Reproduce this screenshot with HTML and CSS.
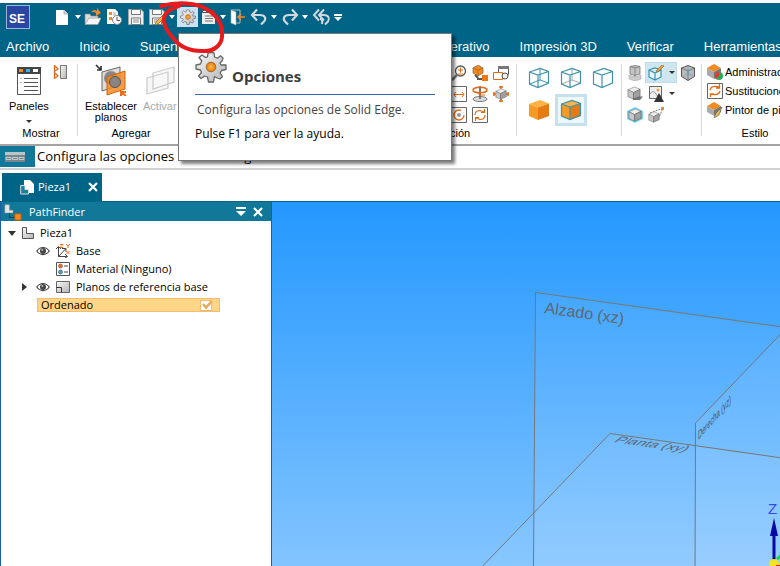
FILE: index.html
```
<!DOCTYPE html>
<html lang="es">
<head>
<meta charset="utf-8">
<title>Solid Edge - Pieza1</title>
<link rel="stylesheet" href="styles.css">
</head>
<body>
<svg class="defs" aria-hidden="true">
  <defs>
    <linearGradient id="metal" x1="0" y1="0" x2="1" y2="1"><stop offset="0" stop-color="#f8f8f8"/><stop offset="1" stop-color="#b4b4b4"/></linearGradient>
    <radialGradient id="amber"><stop offset="0" stop-color="#ffb64a"/><stop offset="1" stop-color="#e87a08"/></radialGradient>
    <linearGradient id="plane" x1="0" y1="0" x2="0" y2="1"><stop offset="0" stop-color="#fff" stop-opacity=".04"/><stop offset="1" stop-color="#fff" stop-opacity=".1"/></linearGradient>
  </defs>
  <symbol id="gear" viewBox="0 0 32 32">
    <path d="M13 2 L15 1.500 L17 1.500 L19 2 L19.500 6 L22.500 7.200 L25.500 4.800 L28 7 L27 10 L25 12 L26 14 L31 14 L31 18.500 L26.500 19.500 L25.200 22 L27.500 25.500 L25 28 L22 27 L19.500 25.500 L18.500 31 L13.500 31 L12.500 26 L9.500 25 L6 27.500 L3.500 25 L6.500 21.500 L5.500 19 L1 18 L1 14 L5.500 13 L6.800 10 L4 6.500 L7 4 L10.500 6.500 L12.500 5.800 Z" fill="url(#metal)" stroke="#666" stroke-width="1.300" stroke-linejoin="round"/>
    <circle cx="16" cy="16" r="4.800" fill="url(#amber)" stroke="#8a5a28" stroke-width=".8"/>
  </symbol>
  <symbol id="disk" viewBox="0 0 20 20"><path d="M2.500 2.500H15L17.500 5V17.500H2.500Z" fill="#eee" stroke="#a5a5a5"/><path d="M5.500 2.500h9v5h-9ZM5.500 11h9v6.500h-9Z" fill="#fff" stroke="#777"/><path d="M7 13h6M7 15h6" stroke="#888"/></symbol>
  <symbol id="wire" viewBox="0 0 22 22"><path d="M1.500 5L12 1.500L20.500 4.500V16L10 20.500L1.500 17ZM1.500 5L10 8L20.500 4.500M10 8V20.500" fill="none" stroke="#3d93ad" stroke-width="1.200"/></symbol>
  <symbol id="solid" viewBox="0 0 22 22"><path d="M1 5L12 1L21 4.500L10 8.500Z" fill="#ffb343"/><path d="M1 5L10 8.500V21L1 17Z" fill="#f59a25"/><path d="M10 8.500L21 4.500V17L10 21Z" fill="#e57b12"/></symbol>
  <symbol id="gray" viewBox="0 0 15 15"><path d="M1 4L8 1L14 3.500L7 7Z" fill="#eee" stroke="#888" stroke-width=".7"/><path d="M1 4L7 7V14L1 11.500Z" fill="#c8c8c8" stroke="#777" stroke-width=".7"/><path d="M7 7L14 3.500V11L7 14Z" fill="#a2a2a2" stroke="#666" stroke-width=".7"/></symbol>
  <symbol id="eye" viewBox="0 0 14 10"><path d="M.8 5C4 .3 10 .3 13.200 5C10 9.700 4 9.700.8 5Z" fill="#fff" stroke="#444" stroke-width="1.200"/><circle cx="7" cy="5" r="3" fill="#444"/><circle cx="6.300" cy="4" r="1" fill="#bbb"/></symbol>
  <symbol id="undo" viewBox="0 0 20 20"><path d="M8 2.500L3 8L8 13.500M3.500 8H11C16.500 8 17.500 12 14.500 15L12 17.500" fill="none" stroke="#d0d9df" stroke-width="2.200"/></symbol>
</svg>

<header class="titlebar">
  <div class="quick">
    <span class="logo">SE</span>
    <button class="tool" aria-label="Nuevo"><svg viewBox="0 0 20 20"><path d="M3 3H11L15 7V18H3Z" fill="#fff"/><path d="M11 3V7H15" fill="#ddd" stroke="#999" stroke-width=".7"/></svg></button>
    <button class="caret" aria-label="Más tipos de documento"></button>
    <button class="tool" aria-label="Abrir"><svg viewBox="0 0 20 20"><path d="M1 17V7H6L7 9H14V17Z" fill="#ddd" stroke="#888" stroke-width=".7"/><path d="M1 17.500L5 11H17L14 17.500Z" fill="#f5f5f5" stroke="#999" stroke-width=".7"/><path d="M7 6Q9 1 13 4V1L17 6L12 9V6Q9 4 7 6Z" fill="#f08a2c"/></svg></button>
    <button class="tool" aria-label="Recientes"><svg viewBox="0 0 20 20"><path d="M2 2H10L13 5V17H2Z" fill="#fff"/><path d="M4 5h3v3H4Z M4 10h3v3H4Z" fill="#f08a2c"/><path d="M8 6h3M8 8h3" stroke="#aaa"/><circle cx="12" cy="13" r="4.500" fill="#f8f8f8" stroke="#888"/><path d="M12 10V13.500H15" fill="none" stroke="#555"/></svg></button>
    <button class="tool" aria-label="Guardar"><svg><use href="#disk"/></svg></button>
    <button class="tool" aria-label="Guardar como"><svg viewBox="0 0 20 20"><use href="#disk"/><path d="M16 8L9 15L8 18L11 17L18 10Z" fill="#ffb343" stroke="#8a6a30" stroke-width=".7"/></svg></button>
    <button class="caret" aria-label="Más opciones de guardado"></button>
    <button class="tool active" aria-label="Opciones"><svg viewBox="0 0 20 20"><use href="#gear" x="2" y="2" width="16" height="16"/></svg></button>
    <button class="tool" aria-label="Personalizar"><svg viewBox="0 0 20 20"><path d="M3 3h13v14H3Z" fill="#ededed"/><path d="M3 3h13v3H3Z" fill="#555"/><path d="M4 4h3v1H4Z M9 4h3v1H9Z" fill="#fff"/><path d="M6 9h8M6 11.500h8M6 14h8" stroke="#777"/></svg></button>
    <button class="caret slim" aria-label="Más"></button>
    <button class="tool" aria-label="Cerrar"><svg viewBox="0 0 20 20"><path d="M3 3H12V16H8" fill="none" stroke="#bbb"/><path d="M3 3L8 5V18L3 16Z" fill="#fff" stroke="#aaa" stroke-width=".6"/><path d="M17 10H11M13 7L10 10L13 13" stroke="#f08a2c" stroke-width="1.500" fill="none"/></svg></button>
    <button class="tool" aria-label="Deshacer"><svg><use href="#undo"/></svg></button>
    <button class="caret" aria-label="Lista deshacer"></button>
    <button class="tool" aria-label="Rehacer"><svg viewBox="0 0 20 20"><use href="#undo" transform="matrix(-1 0 0 1 20 0)"/></svg></button>
    <button class="caret" aria-label="Lista rehacer"></button>
    <button class="tool" aria-label="Anterior"><svg viewBox="0 0 20 20"><path d="M8 2.500L3 8L8 13.500M13 2.500L8 8L13 13.500M8.500 8H13C17.500 8 19 11.500 17 14.500L14 17.500M9 12Q12 12 11 17" fill="none" stroke="#d0d9df" stroke-width="2"/></svg></button>
    <button class="caret barred" aria-label="Personalizar barra"></button>
  </div>
  <nav class="tabs">
    <a href="#">Archivo</a><a href="#">Inicio</a><a href="#" class="surfaces">Superficies</a><a href="#">Diseño generativo</a><a href="#">Impresión 3D</a><a href="#">Verificar</a><a href="#">Herramientas</a>
  </nav>
</header>

<section class="ribbon">
  <div class="group show">
    <div class="body">
      <button class="big"><svg viewBox="0 0 32 32"><path d="M4.500 3.500h23v27h-23Z" fill="#fff" stroke="#555"/><path d="M4 3h24v7H4Z" fill="#444"/><path d="M6 5h4v3H6Z" fill="#f28a22"/><path d="M13 5h4v3h-4Z" fill="#39b5e5"/><path d="M20 5h5v3h-5Z" fill="#fff"/><path d="M11 14.500h14M11 18.500h14M11 22.500h14M11 26.500h14" stroke="#555"/><path d="M7 14.500h2M7 18.500h2" stroke="#bbb"/></svg><span>Paneles</span><i class="down"></i></button>
      <button class="mini" aria-label="Paneles laterales"><svg viewBox="0 0 16 16"><path d="M1.500 1V15M2 2L5 5L2 7M2 9L5 12L2 14" fill="none" stroke="#e06a20" stroke-width="1.300"/><path d="M7.500 1.500h6v13h-6Z" fill="url(#metal)" stroke="#777"/></svg></button>
    </div>
    <h2>Mostrar</h2>
  </div>
  <div class="group add">
    <div class="body">
      <button class="big"><svg viewBox="0 0 32 32"><path d="M7 8L25 3V21L7 27Z" fill="#ddd" stroke="#666"/><circle cx="16" cy="14" r="7" fill="#888"/><path d="M12 13L30 7V25L12 31Z" fill="#f28a22" fill-opacity=".85" stroke="#cf6510"/><circle cx="20" cy="18" r="5.500" fill="#8b8582" stroke="#555"/><path d="M1 1L6 6M6 2V6H2" fill="none" stroke="#333" stroke-width="1.700"/><path d="M31 32L26 28M26 32V28H31" fill="none" stroke="#ef6c16" stroke-width="2"/></svg><span>Establecer<br>planos</span></button>
      <button class="big" disabled><svg viewBox="0 0 32 32"><path d="M9 9L30 3V18L9 25Z M3 14L24 8V24L3 30Z" fill="#f4f4f4" fill-opacity=".7" stroke="#ccc" stroke-width="1.300"/></svg><span>Activar</span></button>
    </div>
    <h2>Agregar</h2>
  </div>
  <div class="filler"></div>
  <div class="group orient">
    <div class="body grid3">
      <button class="icon" aria-label="Zoom"><svg viewBox="0 0 16 16"><circle cx="9.500" cy="6" r="5" fill="#fff" stroke="#555" stroke-width="1.300"/><path d="M6 10L1 15" stroke="#777" stroke-width="2.500"/><path d="M7 5h5M9.500 2.500v5M7 9h5" stroke="#e36b13"/></svg></button>
      <button class="icon" aria-label="Vista común"><svg viewBox="0 0 16 16"><path d="M1 3L6 0L11 3V8L6 11L1 8Z" fill="#f28a22" stroke="#7b6754" stroke-width=".7"/><path d="M1 3L6 5L11 3M6 5V11" fill="none" stroke="#a85b14" stroke-width=".7"/><path d="M3 10L6 13M5 14L11 14" stroke="#555" stroke-width="2"/><path d="M10 10h6v6h-6Z" fill="#ee7712"/></svg></button>
      <button class="icon" aria-label="Vistas"><svg viewBox="0 0 16 16"><path d="M5.500 1.500h10v8h-10Z" fill="#fff" stroke="#555"/><path d="M5 1h11v3H5Z" fill="#777"/><path d="M.5 7.500h9v7h-9Z" fill="#fff" stroke="#e36b13"/><circle cx="12" cy="11" r="3" fill="#eee" stroke="#555"/></svg></button>
      <button class="icon" aria-label="Ajustar"><svg viewBox="0 0 16 16"><path d="M.5.500h15v15H.5Z" fill="#fff" stroke="#666"/><path d="M3 8.500h10M5 6L3 8.500L5 11M11 6L13 8.500L11 11" fill="none" stroke="#e36b13"/></svg></button>
      <button class="icon" aria-label="Girar"><svg viewBox="0 0 16 16"><ellipse cx="8" cy="13" rx="7" ry="2.500" fill="#ddd" stroke="#777"/><path d="M8 0v13" stroke="#777" stroke-width="2"/><ellipse cx="8" cy="4" rx="7" ry="2.800" fill="none" stroke="#e36b13" stroke-width="1.500"/><path d="M4 6L8 9H13" fill="none" stroke="#e36b13"/></svg></button>
      <button class="icon" aria-label="Encuadre"><svg viewBox="0 0 16 16"><path d="M8 0v16M0 8h16M6 1h4M6 15h4M1 6v4M15 6v4" stroke="#e36b13" stroke-width="1.500"/><use href="#gray" x="2" y="2" width="12" height="12"/></svg></button>
      <button class="icon" aria-label="Rotar"><svg viewBox="0 0 16 16"><path d="M.5.500h15v15H.5Z" fill="#fff" stroke="#666"/><circle cx="8" cy="8" r="5" fill="none" stroke="#e36b13" stroke-width="1.300" stroke-dasharray="25 6"/><circle cx="8" cy="8" r="2" fill="#999"/></svg></button>
      <button class="icon" aria-label="Actualizar"><svg viewBox="0 0 16 16"><path d="M.5.500h15v15H.5Z" fill="#fff" stroke="#666"/><path d="M3 8Q3 3.500 8 3.500L12 5M12.500 2V5.500H9M13 8Q13 12.500 8 12.500L4 11M3.500 14V10.500H7" fill="none" stroke="#e36b13" stroke-width="1.200"/></svg></button>
    </div>
    <h2>Orientación</h2>
  </div>
  <div class="group cubes">
    <button class="cube" aria-label="Alámbrico"><svg viewBox="0 0 22 22"><use href="#wire"/><path d="M12 1.500V13L1.500 17M12 13L20.500 16" fill="none" stroke="#3d93ad"/></svg></button>
    <button class="cube" aria-label="Aristas ocultas"><svg viewBox="0 0 22 22"><path d="M12 1.500V13L1.500 17M12 13L20.500 16" fill="none" stroke="#aaa"/><use href="#wire"/></svg></button>
    <button class="cube" aria-label="Aristas visibles"><svg><use href="#wire"/></svg></button>
    <button class="cube" aria-label="Sombreado"><svg><use href="#solid"/></svg></button>
    <button class="cube chosen" aria-label="Sombreado con aristas"><svg viewBox="0 0 22 22"><use href="#solid"/><use href="#wire"/></svg></button>
  </div>
  <div class="group views">
    <button class="icon" aria-label="Reflejo"><svg viewBox="0 0 16 16"><path d="M3 1.500L8 .5L13 1.500V9L8 10.500L3 9Z" fill="#c4c4c4" stroke="#777" stroke-width=".8"/><path d="M3 1.500L8 3L13 1.500M8 3V15" fill="none" stroke="#777" stroke-width=".8"/><path d="M2 10L8 12L14 10V14L8 16L2 14Z" fill="#ccc" stroke="#aaa" stroke-width=".6"/></svg></button>
    <div class="split"><button class="icon" aria-label="Resaltar aristas"><svg viewBox="0 0 16 16"><path d="M1 5L7 3L13 5V12L7 15L1 12ZM1 5L7 8L13 5M7 8V15" fill="#e7f6fa" stroke="#3993ad" stroke-width="1.200"/><path d="M8 6L14 0L16 1L10 7Z" fill="#f4a035" stroke="#7f5e36" stroke-width=".6"/></svg></button><i class="down"></i></div>
    <button class="icon" aria-label="Perspectiva"><svg viewBox="0 0 16 16"><path d="M1.500 3L8 .5L14.500 3V11.500L8 15.500L1.500 11.500Z" fill="#bbb" stroke="#555"/><path d="M1.500 3L8 6L14.500 3M8 6V15.500" fill="none" stroke="#666" stroke-width=".8"/><path d="M8 1V8L3 12M8 8L13 11" fill="none" stroke="#5ba5c0" stroke-width=".8"/></svg></button>
    <button class="icon" aria-label="Sombra"><svg viewBox="0 0 16 16"><path d="M5 10L16 10.500L13 14L6 14Z" fill="#777"/><use href="#gray" x="0" y="0" width="14" height="14"/></svg></button>
    <div class="split plain"><button class="icon" aria-label="Fondo"><svg viewBox="0 0 16 16"><path d="M1.500.5h12v12h-12Z" fill="#eee" stroke="#666"/><path d="M2 8Q5 3 8 8T13 9" fill="none" stroke="#999"/><circle cx="10" cy="4" r="1.500" fill="#f3a040"/><path d="M11 7L16 16H6Z" fill="#333"/></svg></button><i class="down"></i></div>
    <span></span>
    <button class="icon" aria-label="Oclusión"><svg viewBox="0 0 16 16"><path d="M0 4L8 0L16 4V12L8 16L0 12Z" fill="#72d3ee"/><use href="#gray" x="1" y="1" width="14" height="14"/></svg></button>
    <div class="split plain"><button class="icon" aria-label="Enfocar"><svg viewBox="0 0 16 16"><path d="M2 6L15 1L10 13" fill="none" stroke="#777" stroke-dasharray="2 1"/><path d="M13 0h3v3h-3Z" fill="#e98b3c"/><use href="#gray" x="0" y="4" width="12" height="12"/></svg></button></div>
  </div>
  <div class="group style">
    <div class="body rows">
      <button class="row"><svg viewBox="0 0 16 16"><path d="M0 4L7 0L14 4L7 8Z" fill="#f28a22"/><path d="M0 4L7 8V15L0 11Z" fill="#aaa"/><path d="M7 8L14 4V11L7 15Z" fill="#777"/><circle cx="12" cy="12" r="4" fill="#22ad5b"/><path d="M12 12V8A4 4 0 0 0 9 15Z" fill="#e03737"/></svg>Administrador de color</button>
      <button class="row"><svg viewBox="0 0 16 16"><path d="M.5.5h15v15H.5Z" fill="#fff" stroke="#666"/><path d="M3 7Q4 3 9 3.500L12 4M12.500 1V5H9M13 8Q12 12 7 11.500L4 11M3.500 14V11H7" fill="none" stroke="#e36b13" stroke-width="1.300"/></svg>Sustituciones de color</button>
      <button class="row"><svg viewBox="0 0 16 16"><path d="M0 4L7 0L14 4L7 8Z" fill="#f28a22"/><path d="M0 4L7 8V14L0 10Z" fill="#aaa"/><path d="M7 8L14 4V10L7 14Z" fill="#777"/><path d="M15 5L9 11L7 16L12 13Z" fill="#e9bb52" stroke="#555" stroke-width=".6"/></svg>Pintor de piezas</button>
    </div>
    <h2>Estilo</h2>
  </div>
</section>

<section class="prompt">
  <span class="prompt-icon"><svg viewBox="0 0 20 10"><path d="M0 0h20v10H0Z" fill="#77878e"/><path d="M0 0h20v3H0Z" fill="#b8c4c8"/><path d="M1 5.500h5v2H1ZM7.500 5.500h5v2h-5ZM14 5.500h5v2h-5Z" fill="none" stroke="#d2dbdd" stroke-width=".8"/></svg></span>
  <p>Configura las opciones de Solid Edge.</p>
</section>

<div class="docs">
  <div class="doc-tab">
    <svg class="doc-icon" viewBox="0 0 14 15"><path d="M4 0H10L14 4V13H4Z" fill="#fff"/><path d="M.7 5.500H5V9.500H8.500V14H.7Z" fill="#16809f" stroke="#ddd"/></svg>
    <span>Pieza1</span>
    <button class="close" aria-label="Cerrar documento"><svg viewBox="0 0 10 10"><path d="M1 1L9 9M9 1L1 9" stroke="#fff" stroke-width="2.200"/></svg></button>
  </div>
</div>

<main class="work">
  <aside class="finder">
    <div class="finder-head">
      <svg class="finder-icon" viewBox="0 0 20 18"><path d="M1 1H6V7H10V10H1Z" fill="#e8e8e8" stroke="#999" stroke-width=".7"/><path d="M6 10V15H12" fill="none" stroke="#123f50"/><path d="M12 11h7v7h-7Z" fill="#f28a22" stroke="#b45c0c"/></svg>
      <span>PathFinder</span>
      <button class="close" aria-label="Menú"><svg viewBox="0 0 10 10"><path d="M0 0h10v2H0ZM0 4h10L5 9Z" fill="#fff"/></svg></button>
      <button class="close" aria-label="Cerrar panel"><svg viewBox="0 0 10 10"><path d="M1 1L9 9M9 1L1 9" stroke="#fff" stroke-width="2.200"/></svg></button>
    </div>
    <ul class="tree">
      <li class="root"><i class="open"></i><svg class="node" viewBox="0 0 14 14"><path d="M1.500 1.500H5.500V7.500H12.500V12.500H1.500Z" fill="url(#metal)" stroke="#555"/></svg>Pieza1</li>
      <li><i></i><svg class="eye"><use href="#eye"/></svg><svg class="node" viewBox="0 0 14 14"><path d="M2.500 3V12.500H11M2.500 12.500L9.500 5M0 5L2.500 2.500L5 5M9 10L11.500 12.500L9 14M6 4.500H10V8" fill="none" stroke="#444"/><path d="M4 .5h3L4 3.500h3M10 0l2 2l2-2M12 2v2M10.500 7l3 3M13.500 7l-3 3" fill="none" stroke="#ed6f1a"/></svg>Base</li>
      <li><i></i><span class="eye"></span><svg class="node" viewBox="0 0 14 14"><path d="M.5.500h13v13H.5Z" fill="#fff" stroke="#555"/><circle cx="4.500" cy="4" r="2" fill="#ed6f1a" stroke="#744" stroke-width=".6"/><circle cx="4.500" cy="10" r="2" fill="#46a9c3" stroke="#345" stroke-width=".6"/><path d="M8 4h4M8 10h4" stroke="#444"/></svg>Material (Ninguno)</li>
      <li><i class="shut"></i><svg class="eye"><use href="#eye"/></svg><svg class="node" viewBox="0 0 14 14"><path d="M.5 1.500h13v11H.5Z" fill="url(#metal)" stroke="#666"/><path d="M.5 7.500H5.500V12.500" fill="none" stroke="#333"/></svg>Planos de referencia base</li>
    </ul>
    <div class="ordered"><span>Ordenado</span><svg viewBox="0 0 14 11"><path d="M.5.500h11v10H.5Z" fill="#fff" stroke="#efba72"/><path d="M3 4L6 7.500L12 1" fill="none" stroke="#e9aa5a" stroke-width="2.500"/></svg></div>
  </aside>
  <div class="canvas">
    <svg class="scene" role="img" aria-label="Planos de referencia">
      <path d="M263 90L700 152V500H260Z" fill="url(#plane)"/>
      <path d="M338 231L700 282V560H20Z" fill="#fff" fill-opacity=".05"/>
      <path d="M423 221L700 -63V700H422Z" fill="#fff" fill-opacity=".06"/>
      <g fill="none" stroke="#777776">
        <path d="M700 151.500L263.500 90.500L259 700"/>
        <path d="M700 283L338 231.500L32 550"/>
        <path d="M700 -68L423.500 221L422 700"/>
      </g>
      <g class="plane-name">
        <text transform="translate(272 111) rotate(8)" font-size="16">Alzado (xz)</text>
        <text transform="matrix(1 .14 -.7 .55 341 240)" font-size="15">Planta (xy)</text>
        <text class="side" transform="matrix(.48 -.54 0 1 426 238)" font-size="12">Derecha (yz)</text>
      </g>
      <path d="M502 364V334" stroke="#0808a5" stroke-width="3"/>
      <path d="M502 316L506 334H498Z" fill="#0808a5"/>
      <circle cx="502" cy="362" r="5" fill="#f3e41c"/><path d="M505 357L510 353" stroke="#1dd53c" stroke-width="3"/><path d="M504 364H512" stroke="#c22" stroke-width="2"/>
      <text class="axis" x="496" y="312">Z</text>
    </svg>
  </div>
</main>

<div class="tip" role="tooltip">
  <div class="tip-head"><svg><use href="#gear"/></svg><strong>Opciones</strong></div>
  <p class="tip-text">Configura las opciones de Solid Edge.</p>
  <p>Pulse F1 para ver la ayuda.</p>
</div>
<svg class="ring" viewBox="0 0 70 56" aria-hidden="true"><path d="M4 6C20 2 40 2 51 10C62 17 66 27 65 37C64 46 56 52 45 51C30 51 22 46 16 38C9 30 5 21 8 15C10 11 15 8 22 6" fill="none" stroke="#e51b1e" stroke-width="4" stroke-linecap="round"/></svg>
</body>
</html>
```
FILE: styles.css
```
* { box-sizing: border-box; }
body {
  margin: 0;
  padding-top: 3px;
  min-height: 100vh;
  display: flex;
  flex-direction: column;
  position: relative;
  overflow: hidden;
  background: #fff;
  color: #000;
  font: 11px/14px "Liberation Sans", sans-serif;
}
button {
  border: 0;
  padding: 0;
  background: none;
  color: inherit;
  font: inherit;
}
svg { display: block; }
p, h2, ul { margin: 0; padding: 0; }
.defs { position: absolute; width: 0; height: 0; }

/* title bar */
.titlebar { background: #006487; color: #fff; }
.quick { display: flex; align-items: center; height: 28px; padding-left: 6px; }
.logo {
  width: 24px;
  height: 24px;
  margin-right: 22px;
  padding: 6px 2px;
  border: 1px solid #9db5dd;
  background: #2947a2;
  font-size: 12px;
  font-weight: bold;
}
.tool { width: 21px; height: 20px; display: grid; place-items: center; }
.tool svg { width: 20px; height: 20px; }
.tool.active { background: #cfe0f4; }
.caret { width: 10px; height: 20px; display: grid; place-items: center; }
.caret::before { content: ""; border: 3px solid transparent; border-top: 4px solid #fff; border-bottom: 0; }
.caret.slim { width: 8px; }
.caret.barred { align-content: center; gap: 1px; margin-left: 2px; }
.caret.barred::before { border-width: 4px 4px 0; order: 2; }
.caret.barred::after { content: ""; width: 8px; height: 2px; background: #fff; }
.tabs {
  display: flex;
  gap: 30px;
  height: 26px;
  padding: 6px 0 0 6px;
  font-size: 13px;
  line-height: 20px;
  white-space: nowrap;
  overflow: hidden;
}
.tabs a { color: #fff; text-decoration: none; flex: none; }
.surfaces { width: 215px; }

/* ribbon */
.ribbon { display: flex; height: 89px; border-bottom: 2px solid #a3a3a3; overflow: hidden; }
.group { flex: none; padding-top: 5px; position: relative; }
.group + .group::before {
  content: "";
  position: absolute;
  left: 0;
  top: 7px;
  bottom: 8px;
  width: 1px;
  background: #dadada;
}
.group h2 { font-size: 11px; font-weight: normal; line-height: 14px; text-align: center; }
.body { height: 64px; display: flex; }
.filler { flex: 0 0 173px; }
.show { width: 77px; }
.add { width: 108px; }
.orient { width: 158px; }
.cubes { width: 105px; }
.views { width: 80px; }
.style { width: 108px; }
.show h2 { padding-left: 5px; }
.orient h2 { padding-left: 10px; }
.big { display: flex; flex-direction: column; align-items: center; line-height: 11px; }
.big svg { width: 32px; height: 32px; margin: 2px 0 5px; }
.big:disabled { color: #aaa; }
.down { border: 3px solid transparent; border-top: 3px solid #333; border-bottom: 0; }
.big .down { margin-top: 8px; }
.show .body { padding-left: 9px; gap: 4px; }
.mini { align-self: flex-start; margin-top: 2px; }
.mini svg { width: 16px; height: 16px; }
.add .body { padding-left: 8px; gap: 6px; }
.icon { width: 21px; height: 21px; display: grid; place-items: center; }
.icon svg { width: 16px; height: 16px; }
.grid3 {
  display: grid;
  grid-template-columns: repeat(3, 21px);
  grid-auto-rows: 21px;
  justify-content: end;
  padding-right: 5px;
}
.cubes {
  display: grid;
  grid-template-columns: repeat(3, 32px);
  grid-auto-rows: 32px;
  padding-left: 7px;
}
.cube { display: grid; place-items: center; }
.cube svg { width: 22px; height: 22px; }
.cube.chosen { border: 3px solid #c5e2ec; background: #eef7fb; }
.views {
  display: grid;
  grid-template-columns: 21px 32px 22px;
  grid-auto-rows: 21px;
  padding-left: 3px;
}
.split { display: flex; align-items: center; gap: 3px; border: 1px solid #c0dcea; background: #cde6ef; }
.split .icon { height: 19px; width: 20px; }
.split .icon svg { flex: none; }
.split.plain { border-color: transparent; background: none; }
.rows { flex-direction: column; padding-left: 6px; }
.row { display: flex; align-items: center; gap: 2px; height: 19px; white-space: nowrap; }
.row svg { width: 16px; height: 16px; flex: none; }

/* prompt bar */
.prompt { display: flex; height: 24px; border-bottom: 2px solid #d2d2d2; }
.prompt-icon { width: 35px; background: #11789a; padding: 5px; margin-bottom: 1px; display: grid; align-items: center; }
.prompt-icon svg { width: 20px; height: 10px; }
.prompt p { padding-left: 2px; font: 13px/20px "Open Sans", sans-serif; }

/* document tabs */
.docs { height: 32px; padding: 3px 2px 0; border-bottom: 1px solid #006487; }
.doc-tab {
  display: flex;
  align-items: center;
  width: 100px;
  height: 28px;
  padding: 0 4px 0 18px;
  background: #006487;
  color: #fff;
  font: 11px/16px "Open Sans", sans-serif;
}
.doc-icon { width: 14px; height: 15px; margin-right: 4px; }
.close { display: grid; place-items: center; }
.close svg { width: 10px; height: 10px; }
.doc-tab .close { margin-left: auto; }

/* work area */
.work { flex: 1; display: flex; }
.finder { flex: 0 0 272px; border: 1px solid #1c5f9e; border-width: 0 1px; font: 11px/18px "Open Sans", sans-serif; }
.finder-head { display: flex; align-items: center; height: 19px; padding-right: 8px; gap: 7px; background: #11789a; color: #fff; }
.finder-head span { flex: 1; }
.finder-icon { width: 21px; height: 18px; padding-left: 3px; }
.tree { list-style: none; padding: 3px 0 0 6px; }
.tree li { display: flex; align-items: center; height: 18px; gap: 6px; }
.tree li > i { width: 8px; display: grid; place-items: center; margin-left: 13px; }
.tree li.root { gap: 5px; }
.tree li.root > i { margin-left: 1px; }
.tree .node { width: 14px; height: 14px; }
.tree .eye { width: 14px; height: 10px; margin-left: 2px; }
.open::before { content: ""; border: 4px solid transparent; border-top: 5px solid #333; border-bottom: 0; }
.shut::before { content: ""; border: 4px solid transparent; border-left: 5px solid #333; border-right: 0; }
.ordered {
  display: flex;
  align-items: center;
  justify-content: space-between;
  width: 183px;
  height: 14px;
  margin: 2px 0 0 36px;
  padding: 0 5px 0 3px;
  border: 1px solid #f1bd70;
  background: #ffd587;
}
.ordered svg { width: 14px; height: 11px; }
.canvas { flex: 1; min-width: 0; position: relative; background: linear-gradient(#2498ff, #82c4ff); }
.scene { position: absolute; width: 100%; height: 100%; }
.plane-name { fill: #5e6870; font-family: "Liberation Sans", sans-serif; }
.plane-name .side { fill: #46505a; }
.axis { fill: #3b46e8; font: 15px "Liberation Sans", sans-serif; }

/* tooltip */
.tip {
  position: absolute;
  left: 178px;
  top: 33px;
  width: 274px;
  height: 128px;
  padding: 17px 16px;
  border: 1px solid #777;
  background: #fff;
  box-shadow: 3px 3px 3px rgba(0, 0, 0, .5);
  font: 12px/16px "Open Sans", sans-serif;
}
.tip-head { display: flex; height: 44px; gap: 5px; border-bottom: 1px solid #3c62b5; color: #3c3c3c; }
.tip-head svg { width: 32px; height: 32px; }
.tip-head strong { font-size: 15px; line-height: 20px; margin-top: 15px; }
.tip-text { padding: 7px 2px 8px; color: #444; }
.ring { position: absolute; left: 157px; top: 0; width: 70px; height: 56px; pointer-events: none; }
```
